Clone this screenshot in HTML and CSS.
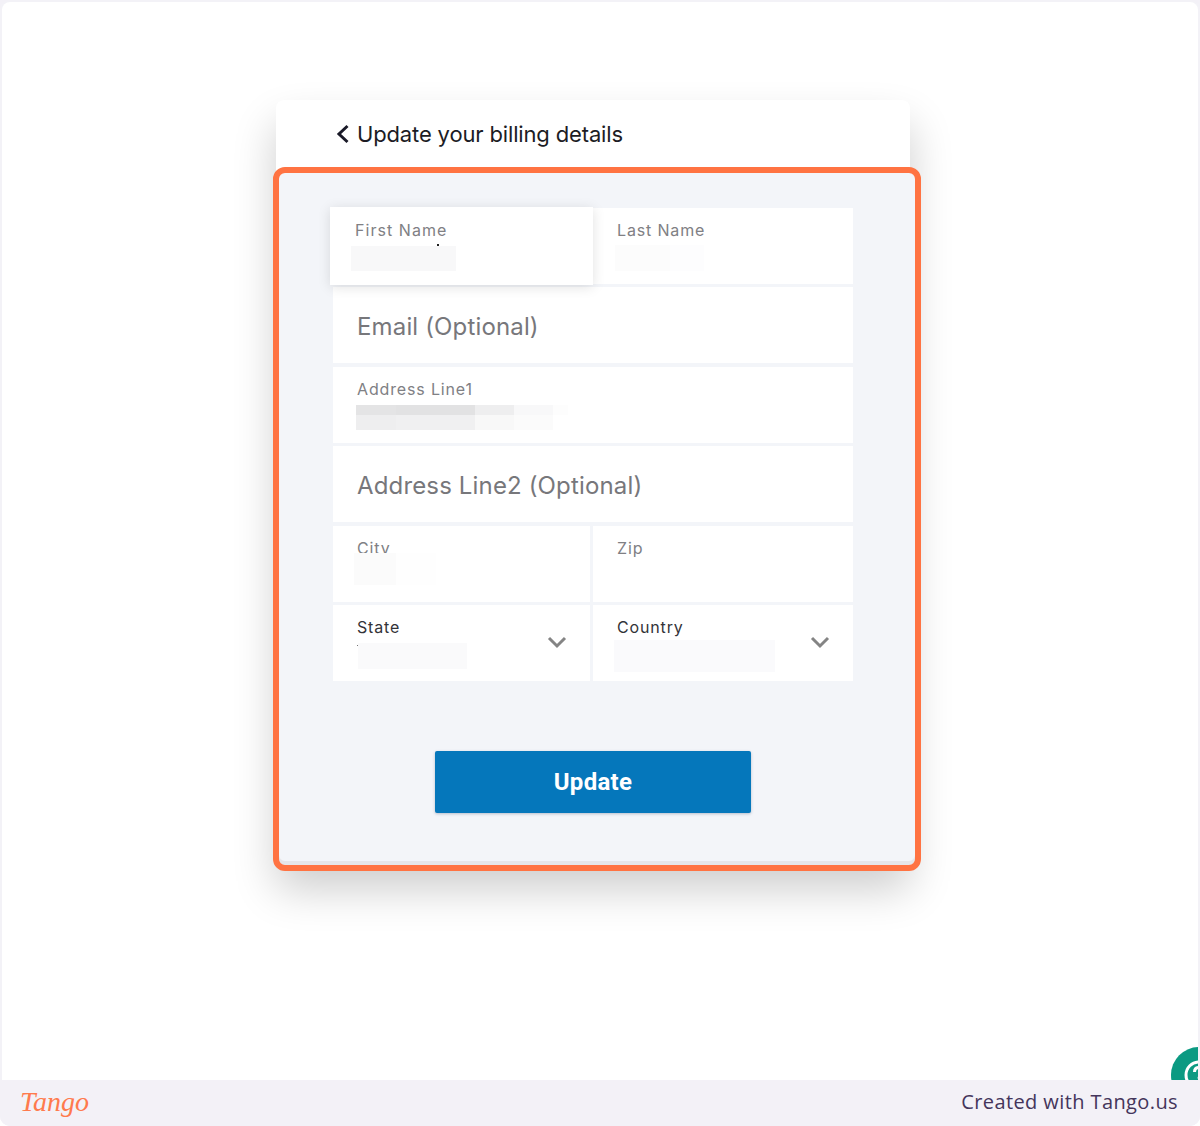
FILE: index.html
```html
<!DOCTYPE html>
<html lang="en">
<head>
    <meta charset="UTF-8">
    <meta name="viewport" content="width=device-width, initial-scale=1.0">
    <title>Update your billing details - Tango</title>
    <link rel="stylesheet" href="styles.css">
</head>
<body>
    <div class="frame">
        <main class="stage">
            <div class="card">
                <header class="card-header">
                    <svg class="back-icon" width="14" height="20" viewBox="0 0 14 20">
                        <polyline points="11.5,2 3,10 11.5,18"></polyline>
                    </svg>
                    <h1>Update your billing details</h1>
                </header>

                <form class="billing-form">
                    <div class="fields">
                        <div class="field field-focus">
                            <label>First Name</label>
                            <div class="blur blur-first"></div>
                        </div>
                        <div class="field">
                            <label>Last Name</label>
                            <div class="blur blur-last"></div>
                        </div>
                        <div class="field field-wide field-empty">Email (Optional)</div>
                        <div class="field field-wide">
                            <label>Address Line1</label>
                            <div class="blur blur-address"></div>
                        </div>
                        <div class="field field-wide field-empty">Address Line2 (Optional)</div>
                        <div class="field">
                            <label>City</label>
                            <div class="blur blur-city"></div>
                        </div>
                        <div class="field">
                            <label>Zip</label>
                        </div>
                        <div class="field field-select">
                            <div>
                                <label>State</label>
                                <div class="blur blur-state"></div>
                            </div>
                            <svg class="down-icon" width="20" height="13" viewBox="0 0 20 13">
                                <polyline points="2,2 10,10 18,2"></polyline>
                            </svg>
                        </div>
                        <div class="field field-select">
                            <div>
                                <label>Country</label>
                                <div class="blur blur-country"></div>
                            </div>
                            <svg class="down-icon" width="20" height="13" viewBox="0 0 20 13">
                                <polyline points="2,2 10,10 18,2"></polyline>
                            </svg>
                        </div>
                    </div>
                    <button type="button" class="update-btn">Update</button>
                </form>
            </div>

            <div class="help-btn">
                <svg width="56" height="56" viewBox="0 0 56 56">
                    <circle class="help-ring" cx="28" cy="28" r="13"></circle>
                    <path class="help-mark" d="M23.5 25c0-3 2-4.500 4.500-4.500s4.500 1.700 4.500 4c0 3.500-4.500 3.500-4.500 7"></path>
                    <circle class="help-dot" cx="28" cy="36" r="1.800"></circle>
                </svg>
            </div>
        </main>

        <footer class="footer">
            <span class="tango-logo">Tango</span>
            <span class="footer-text">Created with Tango.us</span>
        </footer>
    </div>
</body>
</html>
```

FILE: styles.css
```css
* {
    margin: 0;
    padding: 0;
    box-sizing: border-box;
}

body {
    font-family: Inter, 'Noto Sans', sans-serif;
    background-color: #fff;
}

.frame {
    height: 1126px;
    display: flex;
    flex-direction: column;
    background: #f3f1f7;
    border-radius: 0 0 10px 10px;
    overflow: hidden;
}

.stage {
    flex: 1;
    position: relative;
    overflow: hidden;
    background: #fff;
    border: 2px solid #f3f2f7;
    border-bottom: none;
    border-radius: 10px 10px 0 0;
    padding: 98px 0 0 274px;
}

.card {
    width: 634px;
    height: 765px;
    background: #fff;
    border-radius: 8px 8px 0 0;
    box-shadow: 0 24px 44px rgba(0,0,0,0.2);
}

.card-header {
    height: 67px;
    padding: 0 0 0 60px;
    display: flex;
    align-items: center;
    gap: 7px;
}

.card-header h1 {
    font-size: 22px;
    font-weight: 400;
    letter-spacing: -0.15px;
    color: #1c1c24;
}

.back-icon polyline {
    fill: none;
    stroke: #1a1a28;
    stroke-width: 3px;
}

.billing-form {
    margin: 0 -11px 0 -3px;
    padding: 35px 62px 52px 54px;
    height: 704px;
    background: #f3f5f9;
    border: 6px solid #ff7342;
    border-radius: 12px;
    box-shadow: inset 0 -4px 0 #e6e6e9;
}

.fields {
    display: grid;
    grid-template-columns: 257px 260px;
    grid-auto-rows: 76px;
    column-gap: 3px;
    row-gap: 3.4px;
}

.field {
    background: #fff;
    padding: 12px 24px 0;
}

.field label {
    display: block;
    font-size: 16px;
    line-height: 20px;
    letter-spacing: 0.85px;
    color: #808084;
}

.field-wide {
    grid-column: 1 / 3;
}

.field-empty {
    display: flex;
    align-items: center;
    padding-top: 2px;
    font-size: 24px;
    letter-spacing: 0.15px;
    color: #77777b;
}

.field-focus {
    position: relative;
    z-index: 1;
    margin: -1px -3px -1px -3px;
    padding-top: 13px;
    box-shadow: 0 2px 12px rgba(0,0,0,0.12);
}

.field-focus label {
    margin-left: 1px;
    letter-spacing: 1.05px;
}

.field-select {
    display: flex;
    justify-content: space-between;
    align-items: center;
    padding: 0 23px 0 24px;
}

.field-select label {
    color: #333338;
}

.down-icon polyline {
    fill: none;
    stroke: #848484;
    stroke-width: 3px;
}

.blur {
    position: relative;
}

.blur-first {
    width: 105px;
    height: 25px;
    margin: 6px 0 0 -3px;
    background: #f8f8f9;
}

.blur-first::before {
    content: "";
    position: absolute;
    left: 86px;
    top: -2px;
    width: 2px;
    height: 2px;
    background: #222;
}

.blur-last {
    width: 89px;
    height: 26px;
    margin: 5px 0 0 -2px;
    background: linear-gradient(90deg, #fcfcfc 55px, #fdfdfe 55px);
}

.blur-address {
    width: 212px;
    height: 25px;
    margin: 6px 0 0 -1px;
    background:
        linear-gradient(90deg, #e4e4e5 40px, #e2e2e3 40px, #e2e2e3 119px, #eeeeef 119px, #eeeeef 158px, #f8f8f9 158px, #f8f8f9 197px, #fdfdfd 197px) top / 100% 10px no-repeat,
        linear-gradient(90deg, #eeeeef 40px, #f0f0f1 40px, #f0f0f1 119px, #f8f8f8 119px, #f8f8f8 158px, #fbfbfb 158px, #fbfbfb 197px, #fff 197px) bottom / 100% 15px no-repeat;
}

.blur-city {
    width: 82px;
    height: 32px;
    margin: -5px 0 0 -3px;
    background: linear-gradient(90deg, #fbfbfb 42px, #fefefe 42px);
}

.blur-state {
    width: 109px;
    height: 26px;
    margin: 6px 0 0 1px;
    background: #fafafb;
}

.blur-state::before {
    content: "";
    position: absolute;
    left: -1px;
    top: 2px;
    width: 1px;
    height: 1px;
    background: #777;
}

.blur-country {
    width: 161px;
    height: 32px;
    margin: 3px 0 -3px -3px;
    background: #fafafc;
}

.update-btn {
    display: block;
    width: 316px;
    height: 62px;
    margin: 70px 0 0 102px;
    padding-top: 1px;
    background-color: #0577bb;
    color: #fff;
    border: none;
    border-radius: 2px;
    box-shadow: 0 1px 3px rgba(40,60,100,0.3);
    font-family: Roboto, sans-serif;
    font-size: 24px;
    font-weight: 700;
    letter-spacing: 0.3px;
    cursor: pointer;
}

.help-btn {
    position: absolute;
    left: 1169px;
    top: 1045px;
    width: 56px;
    height: 56px;
    border-radius: 50%;
    background: #0b9a82;
}

.help-ring,
.help-mark {
    fill: none;
    stroke: #fff;
    stroke-width: 3px;
}

.help-dot {
    fill: #fff;
}

.footer {
    height: 46px;
    flex-shrink: 0;
    display: flex;
    justify-content: space-between;
    align-items: center;
    padding: 0 22px 3px 20px;
    background: #f3f1f7;
}

.tango-logo {
    font-family: 'Liberation Serif', serif;
    font-style: italic;
    font-size: 28px;
    color: #ff7a4d;
}

.footer-text {
    font-family: 'Open Sans', sans-serif;
    font-size: 20px;
    letter-spacing: 0.4px;
    color: #44355b;
}
```
